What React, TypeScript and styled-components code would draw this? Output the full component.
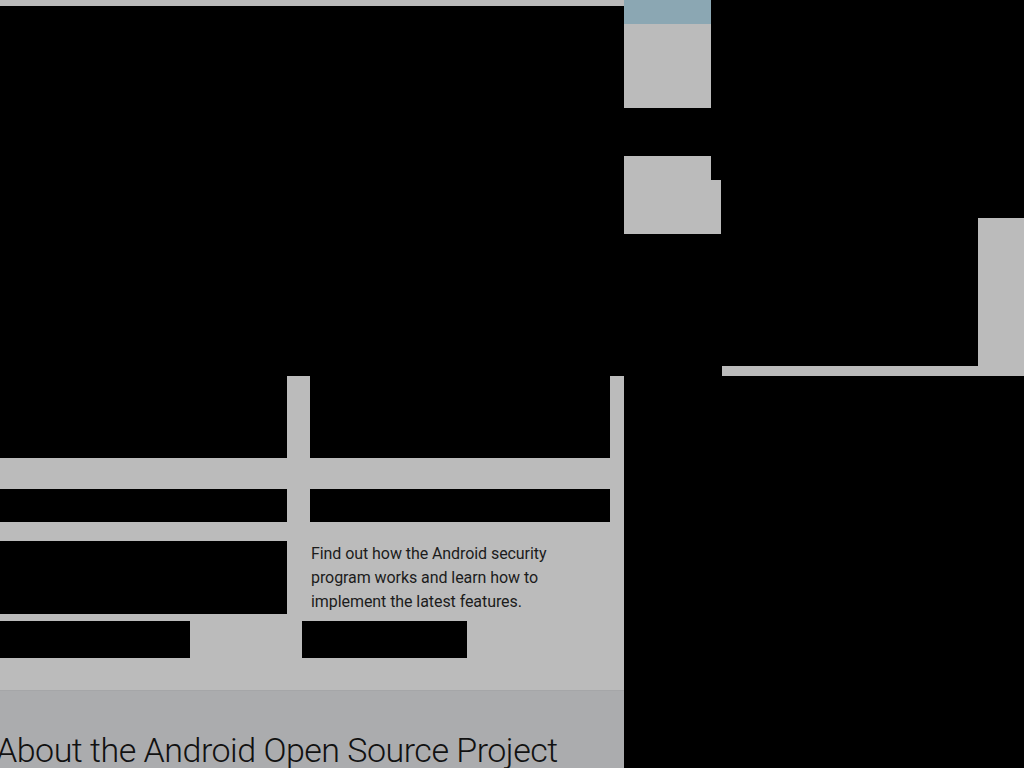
import React from "react";
import styled, { createGlobalStyle } from "styled-components";

const Global = createGlobalStyle`
  html, body { margin: 0; padding: 0; background: #000; }
  body { font-family: Roboto, "Noto Sans", sans-serif; }
`;

const GREY = "#bbbbbb";

const Page = styled.div`
  width: 1024px;
  height: 768px;
  overflow: hidden;
  background: #000;
  display: flex;
  flex-direction: column;
`;

const TopRow = styled.div`
  display: flex;
  height: 376px;
  flex-shrink: 0;
`;

const HeroCol = styled.div`
  width: 624px;
  display: flex;
  flex-direction: column;
`;

const TopStrip = styled.div`
  height: 6px;
  background: ${GREY};
`;

const Hero = styled.div`
  flex: 1;
  background: #000;
`;

const Rail = styled.div`
  width: 97px;
  display: flex;
  flex-direction: column;
`;

const RailBlock = styled.div<{ $h: number; $w?: number; $c?: string; $mt?: number }>`
  height: ${(p) => p.$h}px;
  width: ${(p) => p.$w ?? 87}px;
  background: ${(p) => p.$c ?? GREY};
  margin-top: ${(p) => p.$mt ?? 0}px;
`;

const Side = styled.div`
  flex: 1;
  display: flex;
  flex-direction: column;
`;

const SideUpper = styled.div`
  height: 366px;
  display: flex;
`;

const SideDark = styled.div`
  flex: 1;
  background: #000;
`;

const SidePanel = styled.div`
  width: 46px;
  margin-top: 218px;
  background: ${GREY};
`;

const SideStrip = styled.div`
  height: 10px;
  margin-left: 1px;
  background: ${GREY};
`;

const BottomRow = styled.div`
  display: flex;
  flex: 1;
`;

const MainCol = styled.div`
  width: 624px;
  background: ${GREY};
  display: flex;
  flex-direction: column;
`;

const Cards = styled.div`
  display: grid;
  grid-template-columns: 287px 300px;
  column-gap: 23px;
  padding-right: 14px;
  height: 314px;
`;

const Card = styled.div`
  display: flex;
  flex-direction: column;
`;

const CardImage = styled.div`
  height: 82px;
  background: #000;
`;

const CardTitle = styled.div`
  height: 33px;
  margin-top: 31px;
  background: #000;
`;

const CardBody = styled.div`
  height: 73px;
  margin-top: 19px;
  background: #000;
`;

const CardText = styled.p`
  margin: 20px 0 0 1px;
  height: 72px;
  font-family: Roboto, "Noto Sans", sans-serif;
  font-size: 16px;
  line-height: 24px;
  letter-spacing: -0.07px;
  color: #1c1c1c;
  width: 250px;
`;

const CardButton = styled.div<{ $w: number }>`
  height: 37px;
  width: ${(p) => p.$w}px;
  margin-top: 7px;
  margin-left: -8px;
  background: #000;
`;

const About = styled.section`
  flex: 1;
  background: #abacae;
  border-top: 1px solid #a5a6a8;
  overflow: hidden;
`;

const AboutTitle = styled.h2`
  margin: 38px 0 0 -4px;
  font-family: Roboto, "Noto Sans", sans-serif;
  font-weight: 300;
  font-size: 34px;
  line-height: 42px;
  letter-spacing: -0.5px;
  color: #111;
  white-space: nowrap;
`;

const RightDark = styled.div`
  flex: 1;
  background: #000;
`;

export default function App() {
  return (
    <>
      <Global />
      <Page>
        <TopRow>
          <HeroCol>
            <TopStrip />
            <Hero />
          </HeroCol>
          <Rail>
            <RailBlock $h={24} $c="#8ba7b3" />
            <RailBlock $h={84} />
            <RailBlock $h={24} $mt={48} />
            <RailBlock $h={54} $w={97} />
          </Rail>
          <Side>
            <SideUpper>
              <SideDark />
              <SidePanel />
            </SideUpper>
            <SideStrip />
          </Side>
        </TopRow>
        <BottomRow>
          <MainCol>
            <Cards>
              <Card>
                <CardImage />
                <CardTitle />
                <CardBody />
                <CardButton $w={198} />
              </Card>
              <Card>
                <CardImage />
                <CardTitle />
                <CardText>
                  Find out how the Android security program works and learn how to implement the latest features.
                </CardText>
                <CardButton $w={165} />
              </Card>
            </Cards>
            <About>
              <AboutTitle>About the Android Open Source Project</AboutTitle>
            </About>
          </MainCol>
          <RightDark />
        </BottomRow>
      </Page>
    </>
  );
}
